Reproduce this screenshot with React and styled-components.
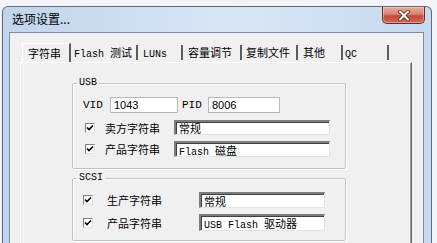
import React from "react";
import styled, { createGlobalStyle } from "styled-components";

const GlobalStyle = createGlobalStyle`
  html, body { margin: 0; padding: 0; background: #f2f4f7; overflow: hidden; }
  body { width: 437px; height: 243px; }
  #root { width: 437px; height: 243px; overflow: hidden; }
`;

const CJK = `"Noto Sans CJK SC", "Noto Sans", sans-serif`;
const MONO = `"Liberation Mono", "Noto Sans CJK SC", monospace`;

const Window = styled.div`
  margin: 6px 0 0 2px;
  width: 430px;
  height: 260px;
  box-sizing: border-box;
  border: 1px solid #5a6b80;
  border-bottom: none;
  border-radius: 6px 6px 0 0;
  background: linear-gradient(to right, #c2d5ec, #d9e6f4 55%, #c6d9ee);
  padding: 0 7px 0 6px;
  display: flex;
  flex-direction: column;
  font-family: ${CJK};
  color: #000;
`;

const TitleBar = styled.div`
  height: 25px;
  flex: none;
  display: flex;
  justify-content: space-between;
  align-items: flex-start;
`;

const Title = styled.span`
  font-size: 12px;
  line-height: 14px;
  margin: 5px 0 0 3px;
`;

const CloseButton = styled.div`
  width: 43px;
  height: 17px;
  margin-right: -1px;
  box-sizing: border-box;
  border: 1px solid #6b2a22;
  border-top: none;
  border-radius: 0 0 5px 5px;
  background: linear-gradient(to bottom, #e9a99c 0%, #d98474 45%, #c4483a 55%, #d06a54 100%);
  box-shadow: inset 0 0 0 1px rgba(255, 255, 255, 0.35);
  display: flex;
  align-items: center;
  justify-content: center;
`;

const Client = styled.div`
  flex: 1;
  border: 1px solid #7a8ba2;
  border-bottom: none;
  background: #f0f0f0;
  padding: 10px 11px 0 10px;
  display: flex;
  flex-direction: column;
`;

const TabStrip = styled.div`
  display: flex;
  align-items: flex-end;
  height: 19px;
  padding-left: 2px;
  flex: none;
`;

const Tab = styled.div`
  box-sizing: border-box;
  width: ${(p) => p.$w}px;
  height: ${(p) => (p.$active ? 19 : 15)}px;
  margin-bottom: ${(p) => (p.$active ? 0 : 2)}px;
  padding: ${(p) => (p.$active ? "2px 0 0 5px" : "0 0 0 " + p.$pad + "px")};
  border-right: 2px solid #5c5c5c;
  border-left: ${(p) => (p.$active ? "1px solid #ffffff" : "none")};
  border-top: ${(p) => (p.$active ? "1px solid #ffffff" : "none")};
  font-size: 11px;
  line-height: 15px;
  white-space: nowrap;
`;

const Lat = styled.span`
  font-family: ${MONO};
  font-size: 10px;
`;

const Panel = styled.div`
  flex: 1;
  border-top: 1px solid #ffffff;
  border-left: 1px solid #ffffff;
  border-right: 1px solid #696969;
  box-shadow: inset -1px 0 0 #a0a0a0;
  padding: 15px 0 0 51px;
  display: flex;
  flex-direction: column;
`;

const Group = styled.fieldset`
  width: 274px;
  box-sizing: border-box;
  margin: ${(p) => p.$mt || 0}px 0 0 0;
  padding: ${(p) => p.$pad};
  border: 1px solid #c3c3c3;
  border-radius: 2px;
  box-shadow: inset 1px 1px 0 #ffffff, 1px 1px 0 #ffffff;
  display: flex;
  flex-direction: column;
  min-width: 0;
`;

const Legend = styled.legend`
  font-family: ${MONO};
  font-size: 10px;
  line-height: 10px;
  padding: 0 2px;
  margin-left: 4px;
`;

const Row = styled.div`
  display: flex;
  align-items: center;
  height: ${(p) => p.$h || 16}px;
  margin-top: ${(p) => p.$mt || 0}px;
  padding-left: ${(p) => p.$pl || 0}px;
`;

const FieldLabel = styled.span`
  width: ${(p) => p.$w}px;
  margin-left: ${(p) => p.$ml || 0}px;
  flex: none;
  font-family: ${(p) => (p.$mono ? MONO : CJK)};
  font-size: 11px;
  line-height: 14px;
  white-space: nowrap;
`;

const TextBox = styled.div`
  width: ${(p) => p.$w}px;
  height: 100%;
  flex: none;
  box-sizing: border-box;
  background: #ffffff;
  padding-left: 3px;
  display: flex;
  align-items: center;
  font-size: 11px;
  white-space: pre;
  overflow: hidden;
  ${(p) =>
    p.$flat
      ? `border: 1px solid #b5b9c0; font-family: "Liberation Sans", Arial, sans-serif;`
      : `border-top: 2px solid #7d7d7d; border-left: 2px solid #7d7d7d;
         border-right: 1px solid #e3e3e3; border-bottom: 1px solid #e3e3e3;
         box-shadow: inset 1px 1px 0 #404040;
         font-family: ${CJK};`}
`;

const CheckBox = styled.div`
  width: 10px;
  height: 10px;
  flex: none;
  box-sizing: border-box;
  margin-left: ${(p) => p.$ml}px;
  margin-right: ${(p) => p.$mr}px;
  background: #ffffff;
  border-top: 1px solid #808080;
  border-left: 1px solid #808080;
  border-right: 1px solid #e0e0e0;
  border-bottom: 1px solid #e0e0e0;
  display: flex;
  align-items: center;
  justify-content: center;
`;

const Check = () => (
  <svg width="8" height="8" viewBox="0 0 8 8">
    <path d="M1 3.5 L3 5.5 L7 1.5" fill="none" stroke="#000" strokeWidth="1.6" />
  </svg>
);

const CloseIcon = () => (
  <svg width="14" height="11" viewBox="0 0 14 11">
    <path d="M3 1.5 L11 9.5 M11 1.5 L3 9.5" stroke="#5a1e16" strokeWidth="3.6" strokeLinecap="round" />
    <path d="M3 1.5 L11 9.5 M11 1.5 L3 9.5" stroke="#ffffff" strokeWidth="2" strokeLinecap="round" />
  </svg>
);

const tabs = [
  { w: 49, pad: 5, label: "字符串", active: true },
  { w: 67, pad: 3, label: <><Lat>Flash </Lat>测试</> },
  { w: 45, pad: 5, label: <Lat>LUNs</Lat> },
  { w: 59, pad: 5, label: "容量调节" },
  { w: 56, pad: 4, label: "复制文件" },
  { w: 45, pad: 5, label: "其他" },
  { w: 46, pad: 2, label: <Lat>QC</Lat> },
];

function CheckRow({ mt, ml, mr, labelW, label, boxW, value, h }) {
  return (
    <Row $mt={mt} $h={h}>
      <CheckBox $ml={ml} $mr={mr}>
        <Check />
      </CheckBox>
      <FieldLabel $w={labelW}>{label}</FieldLabel>
      <TextBox $w={boxW}>
        <span>{value}</span>
      </TextBox>
    </Row>
  );
}

export default function App() {
  return (
    <>
      <GlobalStyle />
      <Window>
        <TitleBar>
          <Title>选项设置...</Title>
          <CloseButton>
            <CloseIcon />
          </CloseButton>
        </TitleBar>
        <Client>
          <TabStrip>
            {tabs.map((t, i) => (
              <Tab key={i} $w={t.w} $pad={t.pad} $active={t.active}>
                {t.label}
              </Tab>
            ))}
          </TabStrip>
          <Panel>
            <Group $pad="9px 0 11px 0">
              <Legend>USB</Legend>
              <Row $pl={10}>
                <FieldLabel $w={27} $mono>VID</FieldLabel>
                <TextBox $w={68} $flat>1043</TextBox>
                <FieldLabel $w={26} $ml={4} $mono>PID</FieldLabel>
                <TextBox $w={72} $flat>8006</TextBox>
              </Row>
              <CheckRow mt={7} ml={12} mr={10} labelW={69} label="卖方字符串" boxW={156} h={15} value="常规" />
              <CheckRow mt={6} ml={12} mr={10} labelW={69} label="产品字符串" boxW={156} h={16} value={<><Lat>Flash </Lat>磁盘</>} />
            </Group>
            <Group $mt={4} $pad="9px 0 9px 0">
              <Legend>SCSI</Legend>
              <CheckRow ml={10} mr={14} labelW={92} label="生产字符串" boxW={126} h={16} value="常规" />
              <CheckRow mt={6} ml={10} mr={14} labelW={92} label="产品字符串" boxW={126} h={17} value={<><Lat>USB Flash </Lat>驱动器</>} />
            </Group>
          </Panel>
        </Client>
      </Window>
    </>
  );
}
